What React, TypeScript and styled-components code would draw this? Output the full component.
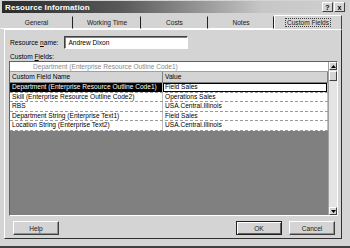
import styled, { createGlobalStyle } from 'styled-components';

const GlobalStyle = createGlobalStyle`
  html, body {
    margin: 0;
    padding: 0;
    background: #d4d4d4;
  }
  body {
    font-family: "Liberation Sans", Arial, sans-serif;
    font-size: 6.6px;
    color: #000;
  }
`;

const Window = styled.div`
  display: flex;
  flex-direction: column;
  width: 350px;
  height: 248px;
  box-sizing: border-box;
  background: #d4d4d4;
  border-bottom: 2px solid #404040;
  overflow: hidden;
`;

const TitleBar = styled.div`
  display: flex;
  align-items: center;
  justify-content: space-between;
  height: 12px;
  margin: 1px 2px 0 2px;
  padding: 0 3px 0 3px;
  background: linear-gradient(to right, #2a2a2a 0%, #5a5a5a 35%, #c6c6c6 75%, #d0d0d0 100%);
`;

const Title = styled.span`
  color: #fff;
  font-weight: bold;
  font-size: 8px;
  letter-spacing: 0.1px;
`;

const TitleButtons = styled.div`
  display: flex;
  gap: 1px;
`;

const TitleButton = styled.span`
  display: flex;
  align-items: center;
  justify-content: center;
  width: 9px;
  height: 8px;
  background: #d4d4d4;
  border: 1px solid;
  border-color: #fff #404040 #404040 #fff;
  font-size: 7px;
  font-weight: bold;
  line-height: 1;
`;

const TabStrip = styled.div`
  display: flex;
  align-items: flex-end;
  height: 16px;
  padding: 0 8px 0 0;
`;

const Tab = styled.div<{ $w: number; $active?: boolean }>`
  display: flex;
  align-items: center;
  justify-content: center;
  box-sizing: border-box;
  width: ${({ $w }) => $w}px;
  height: ${({ $active }) => ($active ? 15 : 13)}px;
  border-top: 1px solid ${({ $active }) => ($active ? '#fff' : 'transparent')};
  border-left: 1px solid ${({ $active }) => ($active ? '#fff' : 'transparent')};
  border-right: 1px solid ${({ $active }) => ($active ? '#404040' : '#202020')};
  border-bottom: 1px solid ${({ $active }) => ($active ? '#d4d4d4' : '#fff')};
  margin-bottom: ${({ $active }) => ($active ? -1 : 0)}px;
  background: #d4d4d4;
  color: #202020;
`;

const Focus = styled.span`
  outline: 1px dotted #404040;
  padding: 0 1px;
`;

const Panel = styled.div`
  display: flex;
  flex-direction: column;
  box-sizing: border-box;
  margin: 0 8px 7px 4px;
  flex: 1;
  border-top: 1px solid #fff;
  border-left: 1px solid #fff;
  border-right: 1px solid #303030;
  border-bottom: 1px solid #303030;
  padding: 6px 4px 2px 4px;
`;

const NameRow = styled.div`
  display: flex;
  align-items: center;
  gap: 6px;
  padding-left: 1px;
  height: 13px;
`;

const Label = styled.span`
  white-space: nowrap;
`;

const Accel = styled.span`
  text-decoration: underline;
`;

const NameInput = styled.div`
  box-sizing: border-box;
  width: 124px;
  height: 13px;
  background: #fff;
  border: 1px solid;
  border-color: #404040 #fff #fff #404040;
  box-shadow: inset 1px 1px 0 #808080;
  padding: 1px 3px;
  line-height: 9px;
`;

const SectionLabel = styled.div`
  margin-top: 3px;
  padding-left: 1px;
  height: 9px;
  line-height: 9px;
`;

const Grid = styled.div`
  display: flex;
  box-sizing: border-box;
  height: 155px;
  margin-right: -1px;
  border: 1px solid;
  border-color: #606060 #fff #fff #606060;
  background: #808080;
`;

const Sheet = styled.div`
  flex: 1;
  display: flex;
  flex-direction: column;
`;

const EditBar = styled.div`
  height: 9px;
  line-height: 9px;
  background: #fff;
  color: #8a8a8a;
  padding-left: 23px;
  border-bottom: 1px solid #a0a0a0;
`;

const Row = styled.div<{ $header?: boolean }>`
  display: grid;
  grid-template-columns: 153px 1fr;
  height: ${({ $header }) => ($header ? 10 : 8.5)}px;
  line-height: ${({ $header }) => ($header ? 10 : 8.5)}px;
  background: ${({ $header }) => ($header ? '#d4d4d4' : '#fff')};
  border-bottom: 1px ${({ $header }) => ($header ? 'solid #808080' : 'dashed #9a9a9a')};
`;

const Cell = styled.div<{ $selected?: boolean; $editing?: boolean; $header?: boolean }>`
  padding-left: 2px;
  white-space: nowrap;
  overflow: hidden;
  border-right: 1px solid ${({ $header }) => ($header ? '#808080' : '#c0c0c0')};
  background: ${({ $selected }) => ($selected ? '#000' : 'transparent')};
  color: ${({ $selected }) => ($selected ? '#fff' : '#000')};
  box-shadow: ${({ $editing }) => ($editing ? 'inset 0 0 0 1px #000' : 'none')};
`;

const ScrollBar = styled.div`
  display: flex;
  flex-direction: column;
  width: 8px;
  background: #e4e4e4;
  border-left: 1px solid #a0a0a0;
`;

const ArrowButton = styled.div`
  display: flex;
  align-items: center;
  justify-content: center;
  box-sizing: border-box;
  height: 8px;
  background: #d4d4d4;
  border: 1px solid;
  border-color: #fff #404040 #404040 #fff;
`;

const Thumb = styled.div`
  box-sizing: border-box;
  height: 10px;
  margin-top: 1px;
  background: #d4d4d4;
  border: 1px solid;
  border-color: #fff #404040 #404040 #fff;
`;

const Track = styled.div`
  flex: 1;
`;

const ButtonRow = styled.div`
  display: flex;
  align-items: center;
  margin-top: 5px;
  padding: 0 2px 0 4px;
  gap: 7px;
`;

const Spacer = styled.div`
  flex: 1;
`;

const Button = styled.div<{ $default?: boolean }>`
  display: flex;
  align-items: center;
  justify-content: center;
  box-sizing: border-box;
  width: 46px;
  height: 14px;
  background: #d4d4d4;
  border: 1px solid;
  border-color: ${({ $default }) => ($default ? '#202020' : '#fff #404040 #404040 #fff')};
  box-shadow: ${({ $default }) =>
    $default ? 'inset 1px 1px 0 #fff, inset -1px -1px 0 #606060' : 'inset -1px -1px 0 #909090'};
  color: #202020;
`;

const rows = [
  { name: 'Department (Enterprise Resource Outline Code1)', value: 'Field Sales' },
  { name: 'Skill (Enterprise Resource Outline Code2)', value: 'Operations Sales' },
  { name: 'RBS', value: 'USA.Central.Illinois' },
  { name: 'Department String (Enterprise Text1)', value: 'Field Sales' },
  { name: 'Location String (Enterprise Text2)', value: 'USA.Central.Illinois' },
];

const tabs = [
  { label: 'General', w: 73 },
  { label: 'Working Time', w: 68 },
  { label: 'Costs', w: 67 },
  { label: 'Notes', w: 66 },
];

export default function App() {
  return (
    <>
      <GlobalStyle />
      <Window>
        <TitleBar>
          <Title>Resource Information</Title>
          <TitleButtons>
            <TitleButton>?</TitleButton>
            <TitleButton>x</TitleButton>
          </TitleButtons>
        </TitleBar>
        <TabStrip>
          {tabs.map((t) => (
            <Tab key={t.label} $w={t.w}>
              {t.label}
            </Tab>
          ))}
          <Tab $w={68} $active>
            <Focus>Custom Fields</Focus>
          </Tab>
        </TabStrip>
        <Panel>
          <NameRow>
            <Label>
              Resource <Accel>n</Accel>ame:
            </Label>
            <NameInput>Andrew Dixon</NameInput>
          </NameRow>
          <SectionLabel>
            Custom <Accel>F</Accel>ields:
          </SectionLabel>
          <Grid>
            <Sheet>
              <EditBar>Department (Enterprise Resource Outline Code1)</EditBar>
              <Row $header>
                <Cell $header>Custom Field Name</Cell>
                <Cell $header>Value</Cell>
              </Row>
              {rows.map((r, i) => (
                <Row key={i}>
                  <Cell $selected={i === 0}>{r.name}</Cell>
                  <Cell $editing={i === 0}>{r.value}</Cell>
                </Row>
              ))}
            </Sheet>
            <ScrollBar>
              <ArrowButton>
                <svg width="5" height="3" viewBox="0 0 5 3">
                  <path d="M0 3 L2.5 0 L5 3 Z" fill="#000" />
                </svg>
              </ArrowButton>
              <Thumb />
              <Track />
              <ArrowButton>
                <svg width="5" height="3" viewBox="0 0 5 3">
                  <path d="M0 0 L2.5 3 L5 0 Z" fill="#000" />
                </svg>
              </ArrowButton>
            </ScrollBar>
          </Grid>
          <ButtonRow>
            <Button>Help</Button>
            <Spacer />
            <Button $default>OK</Button>
            <Button>Cancel</Button>
          </ButtonRow>
        </Panel>
      </Window>
    </>
  );
}
